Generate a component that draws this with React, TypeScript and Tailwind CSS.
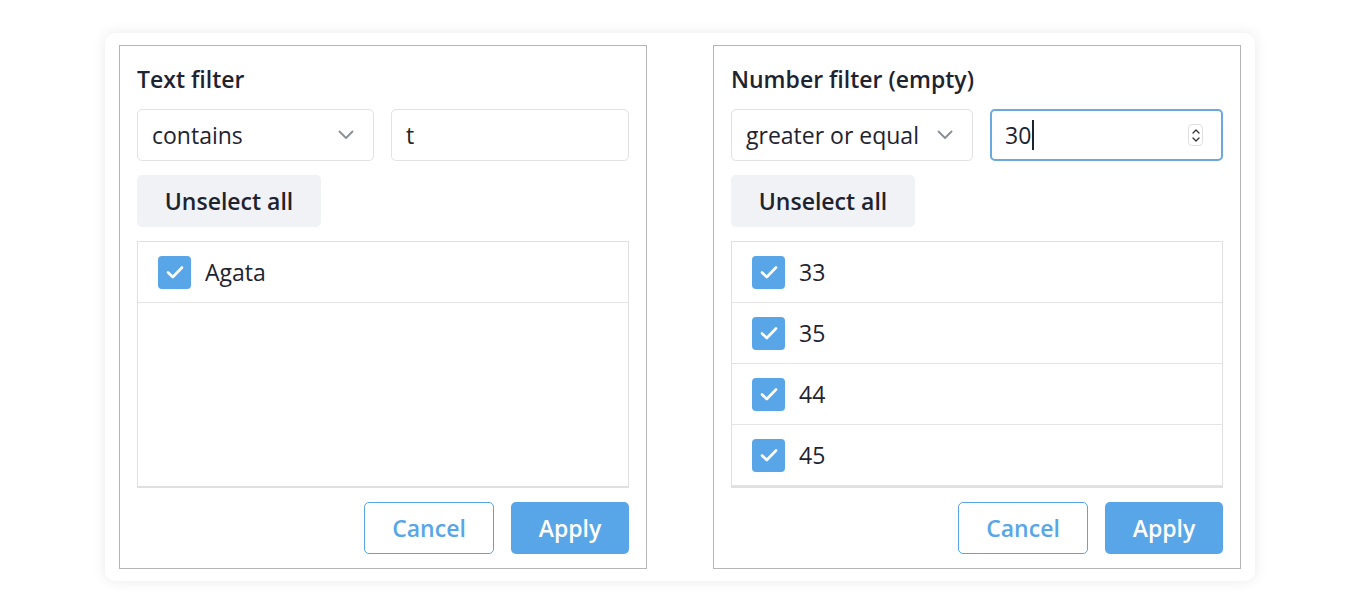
import React from "react";

const font = { fontFamily: '"Open Sans", "Noto Sans", Arial, sans-serif' };

function Chevron() {
  return (
    <svg width="16" height="10" viewBox="0 0 16 10" fill="none" className="shrink-0">
      <path d="M1.5 1.5 L8 8 L14.5 1.5" stroke="#8a8d94" strokeWidth="1.8" strokeLinecap="round" strokeLinejoin="round" />
    </svg>
  );
}

function CheckBox() {
  return (
    <span className="w-[33px] h-[33px] rounded-[4px] bg-[#58a6e7] flex items-center justify-center shrink-0">
      <svg width="18" height="14" viewBox="0 0 18 14" fill="none">
        <path d="M2 7.5 L6.8 12 L16 2.5" stroke="white" strokeWidth="2.6" strokeLinecap="round" strokeLinejoin="round" />
      </svg>
    </span>
  );
}

function Row({ label }: { label: string }) {
  return (
    <div className="h-[61px] shrink-0 border-b border-[#e4e4e4] flex items-center pl-[20px] gap-[14px]">
      <CheckBox />
      <span className="text-[23px] text-[#1f2330]">{label}</span>
    </div>
  );
}

function Spinner() {
  return (
    <span className="w-[15px] h-[22px] rounded-[4px] border border-[#e0e0e0] flex flex-col items-center justify-center gap-[3px]">
      <svg width="8" height="5" viewBox="0 0 8 5" fill="none">
        <path d="M1 4 L4 1 L7 4" stroke="#333" strokeWidth="1.3" strokeLinecap="round" strokeLinejoin="round" />
      </svg>
      <svg width="8" height="5" viewBox="0 0 8 5" fill="none">
        <path d="M1 1 L4 4 L7 1" stroke="#333" strokeWidth="1.3" strokeLinecap="round" strokeLinejoin="round" />
      </svg>
    </span>
  );
}

interface PanelProps {
  title: string;
  op: string;
  value: string;
  focused?: boolean;
  items: string[];
  extra?: boolean;
  selectW: string;
}

function FilterPanel({ title, op, value, focused, items, extra, selectW }: PanelProps) {
  return (
    <div className="w-[528px] h-[524px] border border-[#b5b5b5] px-[17px] pt-[17px] flex flex-col">
      <div className="h-[32px] leading-[32px] text-[23px] font-semibold text-[#1f2330]">{title}</div>
      <div className="mt-[14px] flex gap-[17px]">
        <div className={`${selectW} h-[52px] border border-[#e2e2e2] rounded-[5px] flex items-center justify-between pl-[14px] pr-[19px]`}>
          <span className="text-[23px] text-[#1f2330]">{op}</span>
          <Chevron />
        </div>
        <div
          className={`flex-1 h-[52px] rounded-[5px] flex items-center ${
            focused ? "border-2 border-[#6aa8dd] pl-[13px] pr-[18px]" : "border border-[#e2e2e2] pl-[14px] pr-[19px]"
          }`}
        >
          <span className="text-[23px] text-[#1f2330]">{value}</span>
          {focused && <span className="w-[2px] h-[30px] bg-[#1f2330] ml-[1px]" />}
          {focused && <span className="ml-auto"><Spinner /></span>}
        </div>
      </div>
      <div className="mt-[14px]">
        <button className="h-[52px] w-[184px] rounded-[5px] bg-[#f1f2f6] text-[23px] font-semibold text-[#1f2330]">
          Unselect all
        </button>
      </div>
      <div className="mt-[14px] h-[247px] border border-[#e0e0e0] border-b-[2px] flex flex-col overflow-hidden">
        {items.map((i) => (
          <Row key={i} label={i} />
        ))}
        {extra && <div className="h-[4px] border-t border-[#e4e4e4] shrink-0" />}
      </div>
      <div className="mt-[14px] flex justify-end gap-[17px]">
        <button className="w-[130px] h-[52px] rounded-[5px] border-[1.5px] border-[#58a6e7] bg-white text-[23px] font-semibold text-[#58a6e7]">
          Cancel
        </button>
        <button className="w-[118px] h-[52px] rounded-[5px] bg-[#58a6e7] text-[23px] font-semibold text-white">
          Apply
        </button>
      </div>
    </div>
  );
}

export default function App() {
  return (
    <div className="min-h-screen w-full bg-white flex justify-center pt-[33px]" style={font}>
      <div className="w-[1150px] h-[548px] rounded-[10px] bg-white shadow-[0_0_14px_rgba(0,0,0,0.09)] px-[14px] pt-[12px] flex gap-[66px]">
        <FilterPanel title="Text filter" op="contains" value="t" items={["Agata"]} selectW="w-[237px]" />
        <FilterPanel
          title="Number filter (empty)"
          op="greater or equal"
          value="30"
          focused
          items={["33", "35", "44", "45"]}
          extra
          selectW="w-[242px]"
        />
      </div>
    </div>
  );
}
